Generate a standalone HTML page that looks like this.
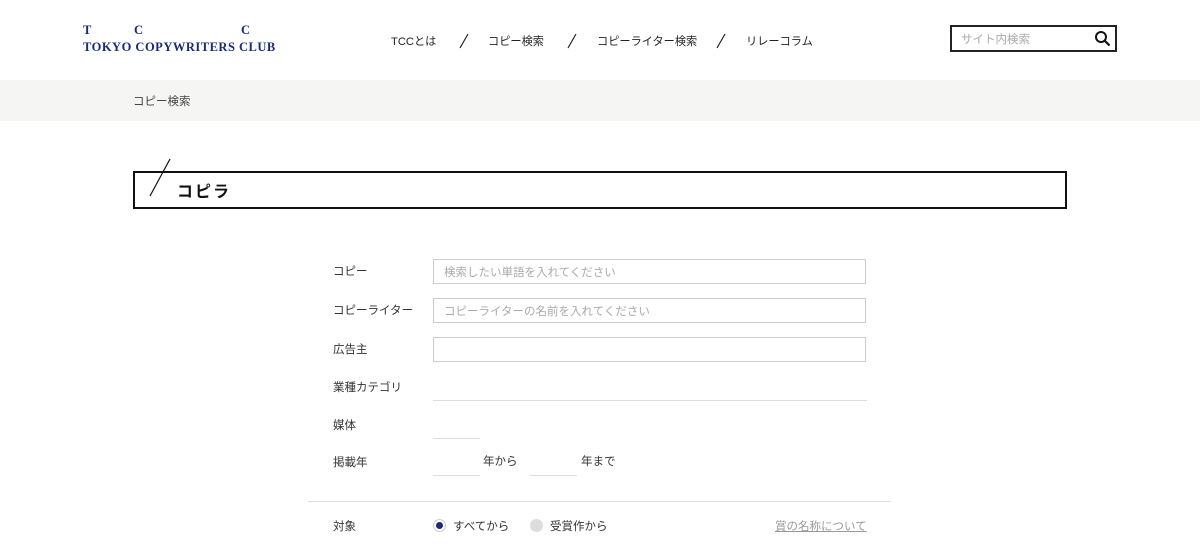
<!DOCTYPE html>
<html><head><meta charset="utf-8"><style>
*{margin:0;padding:0;box-sizing:border-box}
body{width:1200px;height:551px;overflow:hidden;background:#fff;font-family:"Liberation Sans","Noto Sans CJK JP",sans-serif;color:#333;position:relative}
.a{position:absolute}
.logo{color:#1a2a7a;font-family:"Liberation Serif","Noto Serif CJK SC",serif;font-weight:bold;font-size:12.5px;letter-spacing:.5px;white-space:pre;line-height:1}
.nav{font-size:11.2px;color:#222;top:33px}
.lbl{font-size:11.5px;color:#333;left:333px}
.inp{left:433px;width:433px;height:25px;border:1px solid #ccc;font-size:11.5px;color:#aaa;padding:4px 10px}
.ul{height:1px;background:#ddd}
</style></head><body>
<div class="a logo" style="left:83px;top:24px">T</div>
<div class="a logo" style="left:134px;top:24px">C</div>
<div class="a logo" style="left:241px;top:24px">C</div>
<div class="a logo" style="left:83px;top:41px">TOKYO COPYWRITERS CLUB</div>
<div class="a nav" style="left:391px">TCCとは</div>
<svg class="a" style="left:458px;top:33px" width="12" height="16"><line x1="10" y1="1" x2="2" y2="15" stroke="#222" stroke-width="1.2"/></svg>
<div class="a nav" style="left:488px">コピー検索</div>
<svg class="a" style="left:566px;top:33px" width="12" height="16"><line x1="10" y1="1" x2="2" y2="15" stroke="#222" stroke-width="1.2"/></svg>
<div class="a nav" style="left:597px">コピーライター検索</div>
<svg class="a" style="left:715px;top:33px" width="12" height="16"><line x1="10" y1="1" x2="2" y2="15" stroke="#222" stroke-width="1.2"/></svg>
<div class="a nav" style="left:746px">リレーコラム</div>
<div class="a" style="left:950px;top:25px;width:167px;height:27px;border:2px solid #222"></div>
<div class="a" style="left:961px;top:31px;font-size:11.5px;color:#aaa">サイト内検索</div>
<svg class="a" style="left:1094px;top:30px" width="18" height="18" viewBox="0 0 18 18"><circle cx="7" cy="7" r="5" fill="none" stroke="#111" stroke-width="2"/><line x1="10.5" y1="10.5" x2="15.5" y2="15.5" stroke="#111" stroke-width="2.2"/></svg>
<div class="a" style="left:0;top:80px;width:1200px;height:41px;background:#f5f5f3"></div>
<div class="a" style="left:133px;top:93px;font-size:11.5px;color:#444">コピー検索</div>
<div class="a" style="left:133px;top:171px;width:934px;height:38px;border:2.5px solid #111"></div>
<svg class="a" style="left:145px;top:158px" width="30" height="40"><line x1="25" y1="1" x2="5" y2="38" stroke="#111" stroke-width="1.2"/></svg>
<div class="a" style="left:177px;top:178px;font-size:16px;font-weight:bold;color:#111;letter-spacing:2px">コピラ</div>
<div class="a lbl" style="top:263px">コピー</div>
<div class="a inp" style="top:259px">検索したい単語を入れてください</div>
<div class="a lbl" style="top:302px">コピーライター</div>
<div class="a inp" style="top:298px">コピーライターの名前を入れてください</div>
<div class="a lbl" style="top:341px">広告主</div>
<div class="a inp" style="top:337px"></div>
<div class="a lbl" style="top:379px">業種カテゴリ</div>
<div class="a ul" style="left:433px;top:400px;width:434px"></div>
<div class="a lbl" style="top:417px">媒体</div>
<div class="a ul" style="left:433px;top:438px;width:47px"></div>
<div class="a lbl" style="top:454px">掲載年</div>
<div class="a ul" style="left:433px;top:475px;width:47px"></div>
<div class="a" style="left:483px;top:453px;font-size:11.5px">年から</div>
<div class="a ul" style="left:530px;top:475px;width:47px"></div>
<div class="a" style="left:581px;top:453px;font-size:11.5px">年まで</div>
<div class="a ul" style="left:308px;top:501px;width:583px"></div>
<div class="a lbl" style="top:518px">対象</div>
<div class="a" style="left:433px;top:519px;width:13px;height:13px;border-radius:50%;background:#fff;border:1px solid #ccc"></div>
<div class="a" style="left:436px;top:522px;width:7px;height:7px;border-radius:50%;background:#1a2a7a"></div>
<div class="a" style="left:453px;top:518px;font-size:11.5px">すべてから</div>
<div class="a" style="left:530px;top:519px;width:13px;height:13px;border-radius:50%;background:#ddd"></div>
<div class="a" style="left:550px;top:518px;font-size:11.5px">受賞作から</div>
<div class="a" style="left:775px;top:518px;font-size:11.5px;color:#999;text-decoration:underline">賞の名称について</div>
</body></html>
